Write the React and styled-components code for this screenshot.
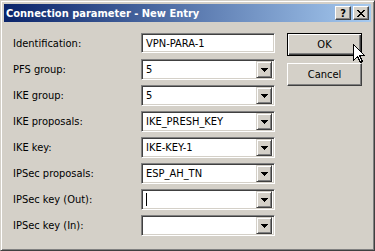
import React from "react";
import styled, { createGlobalStyle } from "styled-components";

const GlobalStyle = createGlobalStyle`
  html, body { margin: 0; padding: 0; background: #d4d0c8; }
  body { font-family: "DejaVu Sans Condensed", "Liberation Sans", sans-serif; font-size: 11px; }
  * { box-sizing: border-box; }
`;

const Window = styled.div`
  position: relative;
  width: 375px;
  height: 251px;
  background: #d4d0c8;
  border-top: 1px solid #d4d0c8;
  border-left: 1px solid #d4d0c8;
  border-right: 1px solid #404040;
  border-bottom: 1px solid #404040;
  box-shadow: inset 1px 1px #ffffff, inset -1px -1px #808080;
  padding: 3px;
  display: flex;
  flex-direction: column;
`;

const TitleBar = styled.div`
  height: 18px;
  display: flex;
  align-items: center;
  padding: 0 2px 0 2px;
  background: linear-gradient(to right, #0a246a, #a6caf0);
`;

const TitleText = styled.div`
  flex: 1;
  color: #ffffff;
  font-weight: bold;
  font-size: 11px;
  white-space: nowrap;
`;

const TitleButtons = styled.div`
  display: flex;
  gap: 2px;
`;

const TitleButton = styled.div`
  width: 16px;
  height: 14px;
  background: #d4d0c8;
  border-top: 1px solid #ffffff;
  border-left: 1px solid #ffffff;
  border-right: 1px solid #404040;
  border-bottom: 1px solid #404040;
  box-shadow: inset -1px -1px #808080;
  display: flex;
  align-items: center;
  justify-content: center;
  color: #000;
  font-weight: bold;
  font-size: 11px;
  line-height: 1;
`;

const Body = styled.div`
  display: flex;
  align-items: flex-start;
  padding: 11px 0 0 9px;
`;

const Form = styled.div`
  display: grid;
  grid-template-columns: 128px 134px;
  grid-auto-rows: 21px;
  row-gap: 5px;
  align-items: center;
`;

const Label = styled.div`
  color: #000;
  white-space: nowrap;
`;

const Field = styled.div`
  position: relative;
  height: ${(p) => (p.$combo ? "21px" : "20px")};
  align-self: start;
  background: #ffffff;
  border-top: 1px solid #808080;
  border-left: 1px solid #808080;
  border-right: 1px solid #ffffff;
  border-bottom: 1px solid #ffffff;
  box-shadow: inset 1px 1px #404040, inset -1px -1px #d4d0c8;
  display: flex;
  align-items: center;
  padding: 0 2px 0 4px;
  color: #000;
`;

const Value = styled.div`
  flex: 1;
  white-space: nowrap;
  display: flex;
  align-items: center;
`;

const Caret = styled.span`
  display: inline-block;
  width: 1px;
  height: 13px;
  background: #000;
`;

const DropButton = styled.div`
  width: 16px;
  height: 17px;
  background: #d4d0c8;
  border-top: 1px solid #d4d0c8;
  border-left: 1px solid #d4d0c8;
  border-right: 1px solid #404040;
  border-bottom: 1px solid #404040;
  box-shadow: inset 1px 1px #ffffff, inset -1px -1px #808080;
  display: flex;
  align-items: center;
  justify-content: center;
`;

const ButtonColumn = styled.div`
  display: flex;
  flex-direction: column;
  gap: 7px;
  margin-left: 12px;
`;

const PushButton = styled.div`
  width: 75px;
  height: 23px;
  background: #d4d0c8;
  display: flex;
  align-items: center;
  justify-content: center;
  color: #000;
  border-top: 1px solid ${(p) => (p.$default ? "#000" : "#ffffff")};
  border-left: 1px solid ${(p) => (p.$default ? "#000" : "#ffffff")};
  border-right: 1px solid ${(p) => (p.$default ? "#000" : "#404040")};
  border-bottom: 1px solid ${(p) => (p.$default ? "#000" : "#404040")};
  box-shadow: ${(p) =>
    p.$default
      ? "inset 1px 1px #ffffff, inset -1px -1px #404040, inset -2px -2px #808080"
      : "inset -1px -1px #808080"};
`;

const Cursor = styled.svg`
  position: absolute;
  left: 352px;
  top: 43px;
  shape-rendering: crispEdges;
`;

const Triangle = () => (
  <svg width="7" height="4" viewBox="0 0 7 4" shapeRendering="crispEdges">
    <path d="M0 0h7v1H0zM1 1h5v1H1zM2 2h3v1H2zM3 3h1v1H3z" fill="#000" />
  </svg>
);

const CloseGlyph = () => (
  <svg width="8" height="7" viewBox="0 0 8 7" shapeRendering="crispEdges">
    <path
      d="M0 0h2v1H0zM6 0h2v1H6zM1 1h2v1H1zM5 1h2v1H5zM2 2h4v1H2zM3 3h2v1H3zM2 4h4v1H2zM1 5h2v1H1zM5 5h2v1H5zM0 6h2v1H0zM6 6h2v1H6z"
      fill="#000"
    />
  </svg>
);

const rows = [
  { label: "Identification:", value: "VPN-PARA-1", combo: false },
  { label: "PFS group:", value: "5", combo: true },
  { label: "IKE group:", value: "5", combo: true },
  { label: "IKE proposals:", value: "IKE_PRESH_KEY", combo: true },
  { label: "IKE key:", value: "IKE-KEY-1", combo: true },
  { label: "IPSec proposals:", value: "ESP_AH_TN", combo: true },
  { label: "IPSec key (Out):", value: "", combo: true, caret: true },
  { label: "IPSec key (In):", value: "", combo: true },
];

export default function App() {
  return (
    <>
      <GlobalStyle />
      <Window>
        <TitleBar>
          <TitleText>Connection parameter - New Entry</TitleText>
          <TitleButtons>
            <TitleButton>?</TitleButton>
            <TitleButton>
              <CloseGlyph />
            </TitleButton>
          </TitleButtons>
        </TitleBar>
        <Body>
          <Form>
            {rows.map((r) => (
              <React.Fragment key={r.label}>
                <Label>{r.label}</Label>
                <Field $combo={r.combo}>
                  <Value>
                    {r.caret ? <Caret /> : r.value}
                  </Value>
                  {r.combo && (
                    <DropButton>
                      <Triangle />
                    </DropButton>
                  )}
                </Field>
              </React.Fragment>
            ))}
          </Form>
          <ButtonColumn>
            <PushButton $default>OK</PushButton>
            <PushButton>Cancel</PushButton>
          </ButtonColumn>
        </Body>
        <Cursor width="12" height="20" viewBox="0 0 12 20">
          <path
            d="M0.5 0.5 L0.5 16.5 L4.5 12.5 L7.5 18.5 L9.5 17.5 L6.5 11.5 L11.5 11.5 Z"
            fill="#fff"
            stroke="#000"
            strokeWidth="1"
          />
        </Cursor>
      </Window>
    </>
  );
}
